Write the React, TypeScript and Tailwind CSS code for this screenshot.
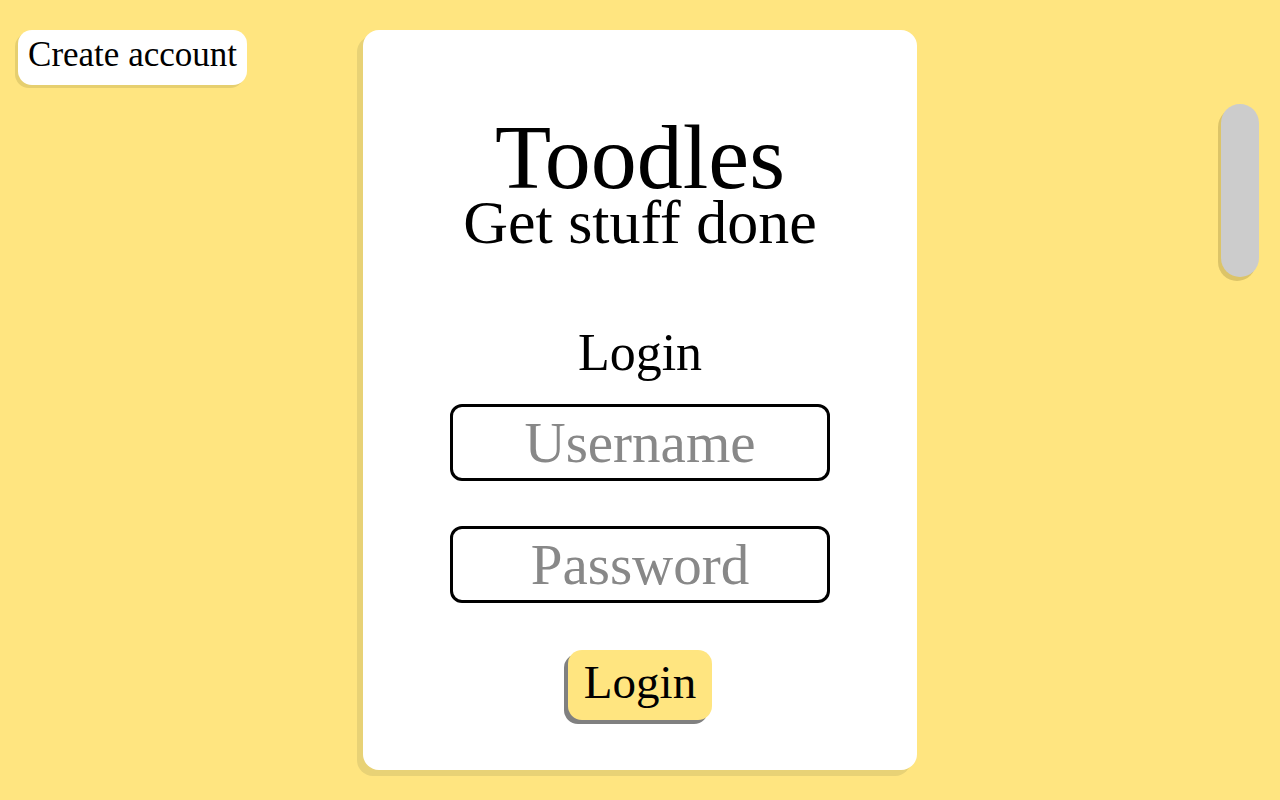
export default function App() {
  const serif = { fontFamily: '"Liberation Serif", "DejaVu Serif", serif' };
  return (
    <div className="w-[1280px] h-[800px] bg-[#ffe580] relative overflow-hidden" style={serif}>
      {/* top-left button */}
      <button className="absolute left-[18px] top-[30px] h-[55px] w-[229px] pb-[6px] rounded-[14px] bg-white text-[35px] leading-none text-black shadow-[-3px_3px_0_#e6cf6f]">
        Create account
      </button>

      {/* right-side slider thing */}
      <div className="absolute left-[1221px] top-[104px] w-[38px] h-[173px] rounded-full bg-[#cccccc] shadow-[-3px_4px_0_#dcc468]" />

      <div className="flex justify-center pt-[30px]">
        <div className="w-[554px] h-[740px] bg-white rounded-[16px] shadow-[-6px_6px_0_#e8d276] flex flex-col items-center">
          <h1 className="mt-[88px] text-[92px] leading-[78px] text-black">Toodles</h1>
          <p className="text-[62px] leading-[52px] text-black">Get stuff done</p>
          <h2 className="mt-[79px] text-[52px] leading-[52px] text-black">Login</h2>
          <input
            placeholder="Username"
            className="mt-[25px] w-[380px] h-[77px] border-[3px] border-black rounded-[12px] text-center text-[57px] placeholder:text-[#888888] outline-none"
          />
          <input
            placeholder="Password"
            type="password"
            className="mt-[45px] w-[380px] h-[77px] border-[3px] border-black rounded-[12px] text-center text-[57px] placeholder:text-[#888888] outline-none"
          />
          <button className="mt-[47px] w-[144px] h-[70px] pb-[6px] rounded-[14px] bg-[#ffe580] text-[47px] leading-none text-black shadow-[-4px_4px_0_#808080]">
            Login
          </button>
        </div>
      </div>
    </div>
  );
}
